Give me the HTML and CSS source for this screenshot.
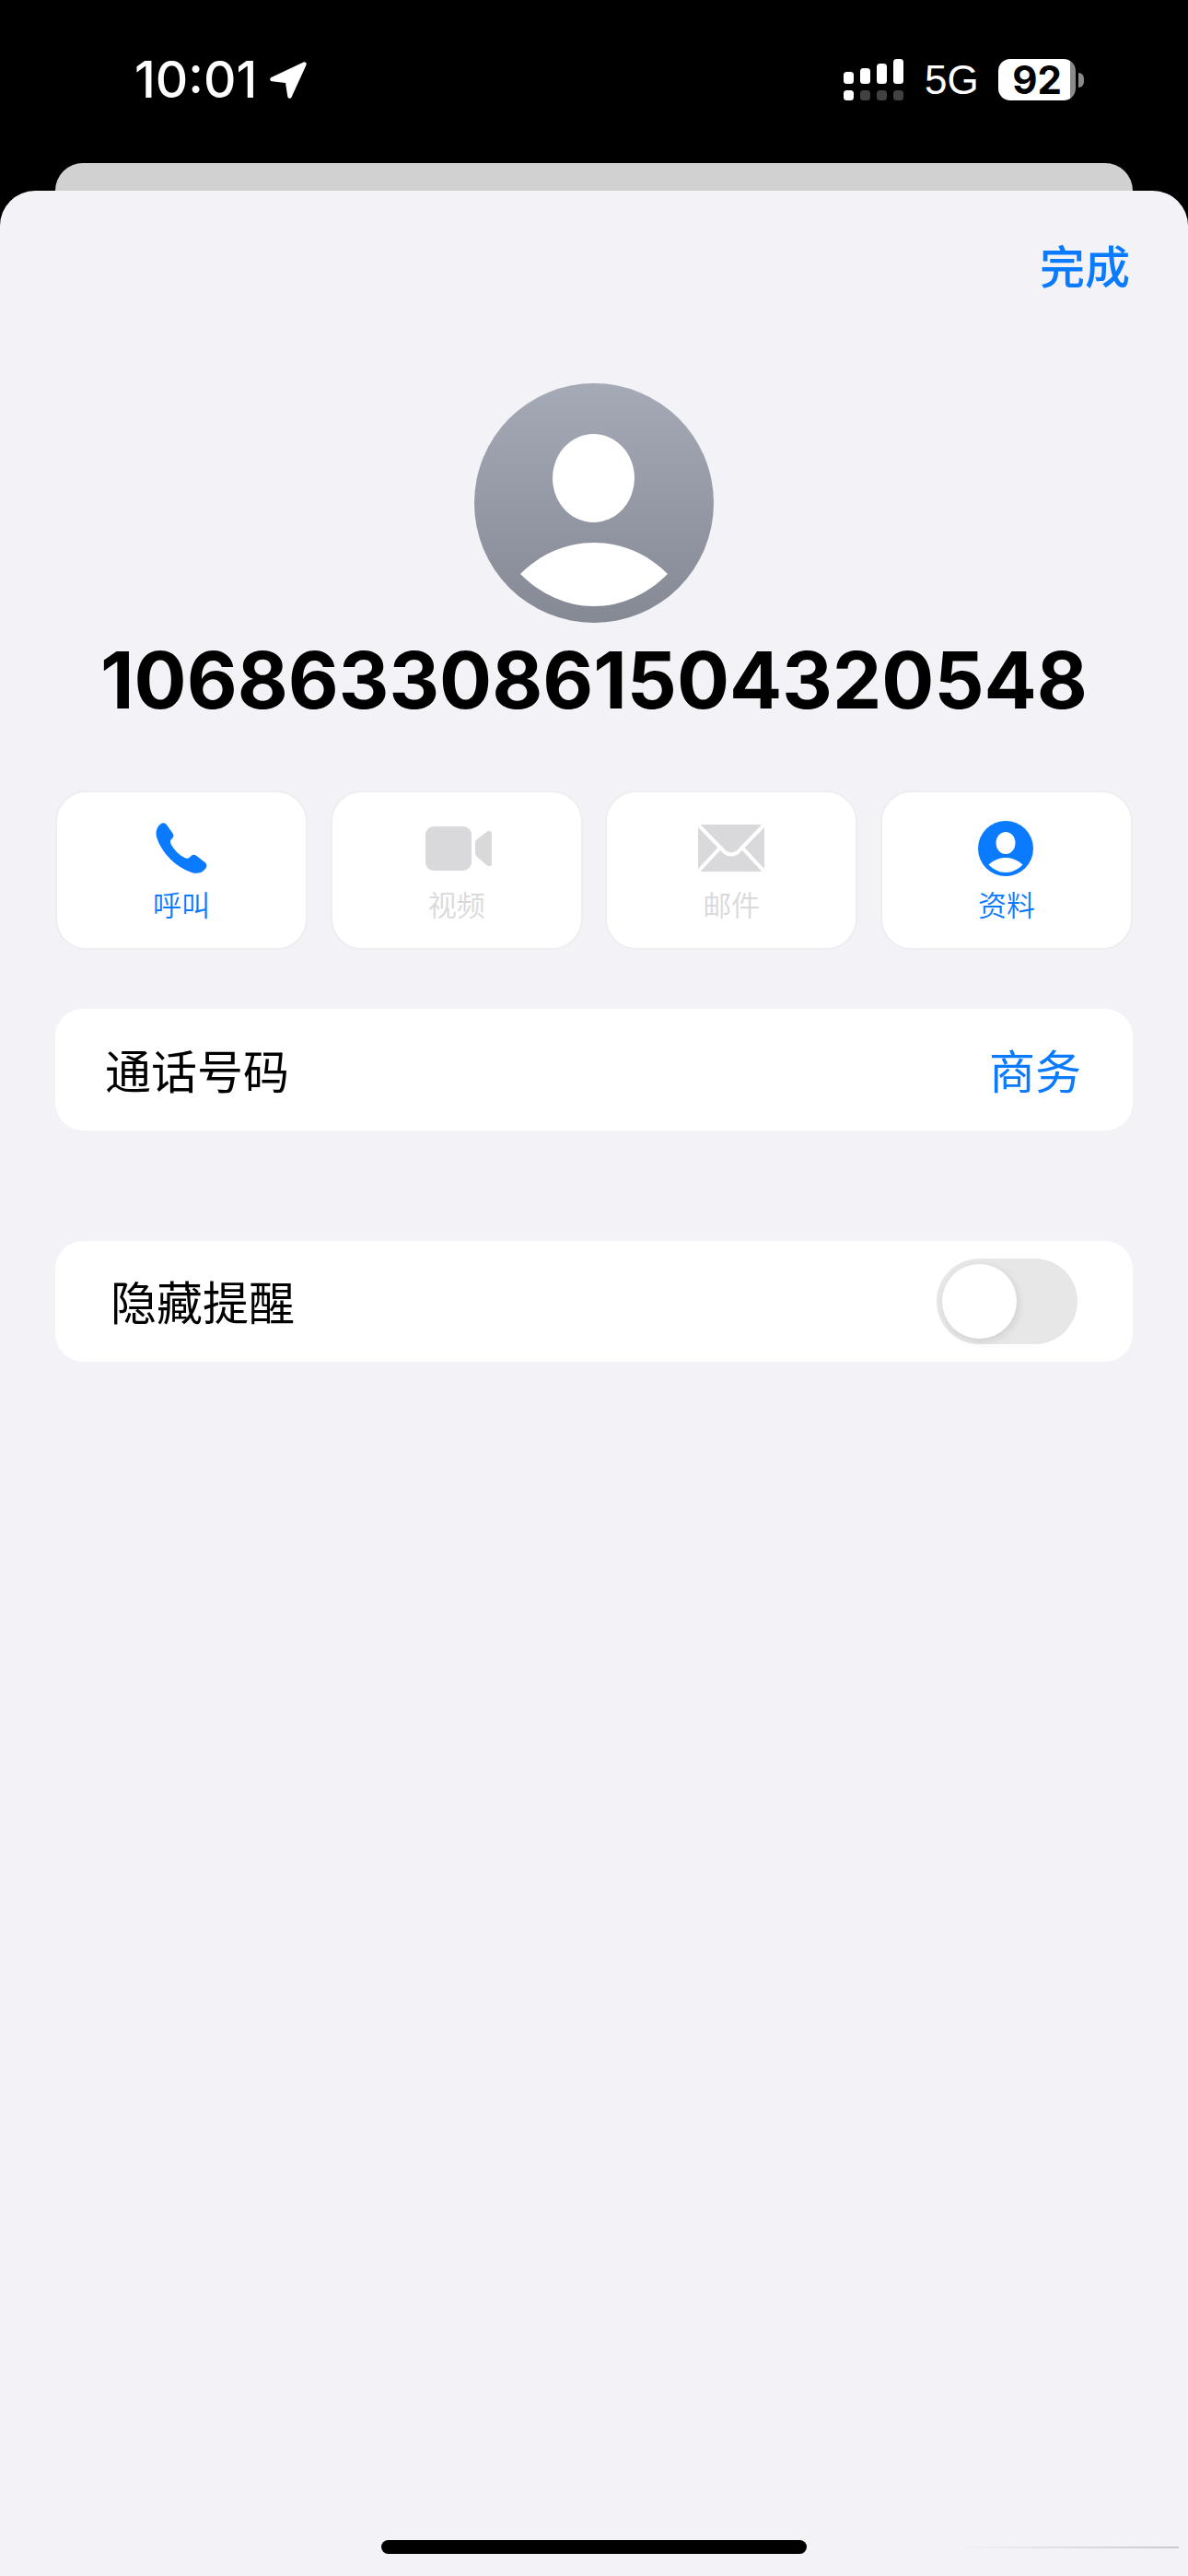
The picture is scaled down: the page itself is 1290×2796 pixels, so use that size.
FILE: index.html
```html
<!DOCTYPE html>
<html lang="zh">
<head>
<meta charset="utf-8">
<title>10686330861504320548</title>
<link rel="stylesheet" href="styles.css">
</head>
<body>
<div class="phone">
  <header class="status">
    <div class="status-left">
      <span class="time">10:01</span>
      <svg class="loc" viewBox="0 0 42 42"><path d="M38.5 3.5 3.5 20 20 22 22.5 38.5Z" fill="#fff" stroke="#fff" stroke-width="4.5" stroke-linejoin="round"/></svg>
    </div>
    <div class="status-right">
      <svg class="signal" viewBox="0 0 65 45">
        <rect x="0" y="14" width="11" height="13" rx="3.5" fill="#fff"/>
        <rect x="18" y="10" width="11" height="17" rx="3.5" fill="#fff"/>
        <rect x="36" y="5" width="11" height="22" rx="3.5" fill="#fff"/>
        <rect x="54" y="0" width="11" height="27" rx="3.5" fill="#fff"/>
        <rect x="0" y="34" width="11" height="11" rx="3.5" fill="#fff"/>
        <rect x="18" y="34" width="11" height="11" rx="3.5" fill="#414141"/>
        <rect x="36" y="34" width="11" height="11" rx="3.5" fill="#414141"/>
        <rect x="54" y="34" width="11" height="11" rx="3.5" fill="#414141"/>
      </svg>
      <span class="net">5G</span>
      <div class="battery"><span class="battery-level">92</span></div>
      <span class="battery-nub"></span>
    </div>
  </header>

  <div class="back-sheet"></div>

  <main class="sheet">
    <div class="sheet-head"><span class="done">完成</span></div>

    <svg class="avatar" viewBox="0 0 260 260">
      <defs>
        <linearGradient id="avatarGrad" x1="0" y1="0" x2="0" y2="1">
          <stop offset="0" stop-color="#a5aab7"/>
          <stop offset="1" stop-color="#858994"/>
        </linearGradient>
      </defs>
      <circle cx="130" cy="130" r="130" fill="url(#avatarGrad)"/>
      <ellipse cx="129.5" cy="103" rx="44.5" ry="48" fill="#fff"/>
      <path d="M50 207C72 185 100 173 130 173C160 173 188 185 210 207C188 229 160 242 130 242C100 242 72 229 50 207Z" fill="#fff"/>
    </svg>

    <h1 class="number">10686330861504320548</h1>

    <nav class="actions">
      <div class="action">
        <svg class="icon icon-phone" viewBox="0 0 56 55"><path fill="#0a7aff" d="M5.5 1.2C8-.6 10.5 0 12 2.3L18.5 11.5C20 13.8 19.5 15.5 17.5 17.5C15.5 19.5 15.5 21.5 17 24C20.5 30 25.5 35 31.5 38C34 39.3 36 39 38 36.5C40 34.5 42 34.3 44.5 36L53.5 43C56 45 56 47.5 54 50C50.5 54.5 45 56 39 54C21 47.5 7 33 1.5 17C-.7 10.5 1 4.5 5.5 1.2Z"/></svg>
        <span class="action-label">呼叫</span>
      </div>
      <div class="action is-off">
        <svg class="icon icon-video" viewBox="0 0 72 48"><rect width="50" height="48" rx="9" fill="#d9d9db"/><path fill="#d9d9db" d="M54 18Q54 15.500 56 14L67 5.500Q72 3 72 8.500V39.500Q72 45 67 42.500L56 33Q54 31.500 54 29Z"/></svg>
        <span class="action-label">视频</span>
      </div>
      <div class="action is-off">
        <svg class="icon icon-mail" viewBox="0 0 72 51"><rect width="72" height="51" rx="4" fill="#d9d9db"/><path d="M-1-1 29 30Q36 35 43 30L73-1M-1 52 25 24M73 52 47 24" fill="none" stroke="#fff" stroke-width="4"/></svg>
        <span class="action-label">邮件</span>
      </div>
      <div class="action">
        <svg class="icon icon-person" viewBox="0 0 60 60"><circle cx="30" cy="30" r="30" fill="#0a7aff"/><ellipse cx="30" cy="24" rx="10.500" ry="12" fill="#fff"/><path d="M11.500 47.500C17 42.500 23 40 30 40C37 40 43 42.500 48.500 47.500C43 53 37 56 30 56C23 56 17 53 11.500 47.500Z" fill="#fff"/></svg>
        <span class="action-label">资料</span>
      </div>
    </nav>

    <section class="row row-call">
      <span class="row-title">通话号码</span>
      <span class="row-value">商务</span>
    </section>

    <section class="row row-hide">
      <span class="row-title">隐藏提醒</span>
      <div class="toggle"><span class="knob"></span></div>
    </section>

    <div class="home"></div>
    <div class="watermark"></div>
  </main>
</div>
</body>
</html>
```
FILE: styles.css
```css
* { box-sizing: border-box; }
html, body { margin: 0; padding: 0; background: #000; }
body { font-family: "Noto Sans CJK SC", "Liberation Sans", sans-serif; }

.phone {
  width: 1290px;
  height: 2796px;
  display: flex;
  flex-direction: column;
  overflow: hidden;
  background: #000;
}

.status {
  height: 177px;
  flex: none;
  display: flex;
  justify-content: space-between;
  align-items: flex-start;
  padding: 64px 113px 0 146px;
  color: #fff;
}
.status-left { display: flex; align-items: center; gap: 13px; height: 45px; }
.time {
  font-family: Inter, "Liberation Sans", sans-serif;
  font-size: 55px;
  font-weight: 500;
  line-height: 45px;
}
.loc { width: 42px; height: 42px; display: block; }
.status-right { display: flex; align-items: center; height: 45px; }
.signal { width: 65px; height: 45px; display: block; margin-right: -1px; }
.net {
  font-family: "Liberation Sans", sans-serif;
  font-size: 44px;
  line-height: 45px;
  margin-left: 24px;
  width: 80px;
}
.battery {
  width: 84px;
  height: 45px;
  border-radius: 13px;
  background: linear-gradient(90deg, #fff 0, #fff 78px, #8a8a8a 78px, #8a8a8a 100%);
  display: flex;
  align-items: center;
  justify-content: center;
}
.battery-level {
  font-family: Inter, "Liberation Sans", sans-serif;
  font-size: 42px;
  font-weight: 700;
  line-height: 45px;
  color: #000;
}
.battery-nub {
  width: 6px;
  height: 16px;
  margin-left: 3px;
  border-radius: 0 6px 6px 0;
  background: #8a8a8a;
}

.back-sheet {
  flex: none;
  height: 30px;
  margin: 0 60px;
  background: #d1d1d1;
  border-radius: 34px 34px 0 0;
}

.sheet {
  flex: 1;
  position: relative;
  display: flex;
  flex-direction: column;
  background: #f2f2f7;
  border-radius: 38px 38px 0 0;
  padding: 0 60px;
}

.sheet-head {
  display: flex;
  justify-content: flex-end;
  padding: 46px 3px 0 0;
  height: 209px;
}
.done {
  font-size: 49px;
  font-weight: 500;
  line-height: 68px;
  color: #0a7aff;
}

.avatar { width: 260px; height: 260px; align-self: center; display: block; flex: none; }

.number {
  margin: 21px 0 0;
  height: 82px;
  text-align: center;
  font-family: Inter, "Liberation Sans", sans-serif;
  font-size: 84.7px;
  font-weight: 700;
  line-height: 82px;
  color: #000;
  white-space: nowrap;
}

.actions {
  display: grid;
  grid-template-columns: repeat(4, 274px);
  justify-content: space-between;
  margin-top: 79px;
}
.action {
  height: 173px;
  border: 2px solid #eeeef1;
  border-radius: 34px;
  background: #fff;
  display: flex;
  flex-direction: column;
  align-items: center;
  position: relative;
  color: #0a7aff;
}
.action.is-off { color: #d9d9db; }
.icon { display: block; flex: none; }
.icon-phone { width: 56px; height: 55px; margin-top: 33px; }
.icon-video { width: 72px; height: 48px; margin: 37px 0 0 5px; }
.icon-mail { width: 72px; height: 51px; margin-top: 35px; }
.icon-person { width: 60px; height: 60px; margin: 31px 2px 0 0; }
.action-label {
  position: absolute;
  left: 0;
  right: 0;
  top: 99px;
  text-align: center;
  font-size: 31px;
  font-weight: 350;
  line-height: 44px;
}

.row {
  display: flex;
  align-items: center;
  justify-content: space-between;
  background: #fff;
  border-radius: 30px;
  flex: none;
}
.row-call { height: 132px; margin-top: 64px; padding: 0 56px 3px 54px; }
.row-hide { height: 131px; margin-top: 120px; padding: 0 60px; }
.row-title { font-size: 50px; line-height: 70px; color: #000; }
.row-hide .row-title { margin-bottom: 3px; }
.row-value { font-size: 50px; line-height: 70px; color: #0a7aff; }

.toggle {
  width: 153px;
  height: 93px;
  border-radius: 47px;
  background: #e7e7e8;
  padding: 6px;
}
.knob {
  display: block;
  width: 81px;
  height: 81px;
  border-radius: 50%;
  background: #fff;
  box-shadow: 2px 3px 10px rgba(0, 0, 0, .1);
}

.home {
  width: 462px;
  height: 15px;
  border-radius: 8px;
  background: #000;
  align-self: center;
  margin-top: auto;
  margin-bottom: 24px;
}
.watermark {
  position: absolute;
  right: 10px;
  bottom: 30px;
  width: 240px;
  height: 2px;
  background: linear-gradient(90deg, rgba(200, 200, 205, 0), rgba(190, 190, 195, .8));
}
```
